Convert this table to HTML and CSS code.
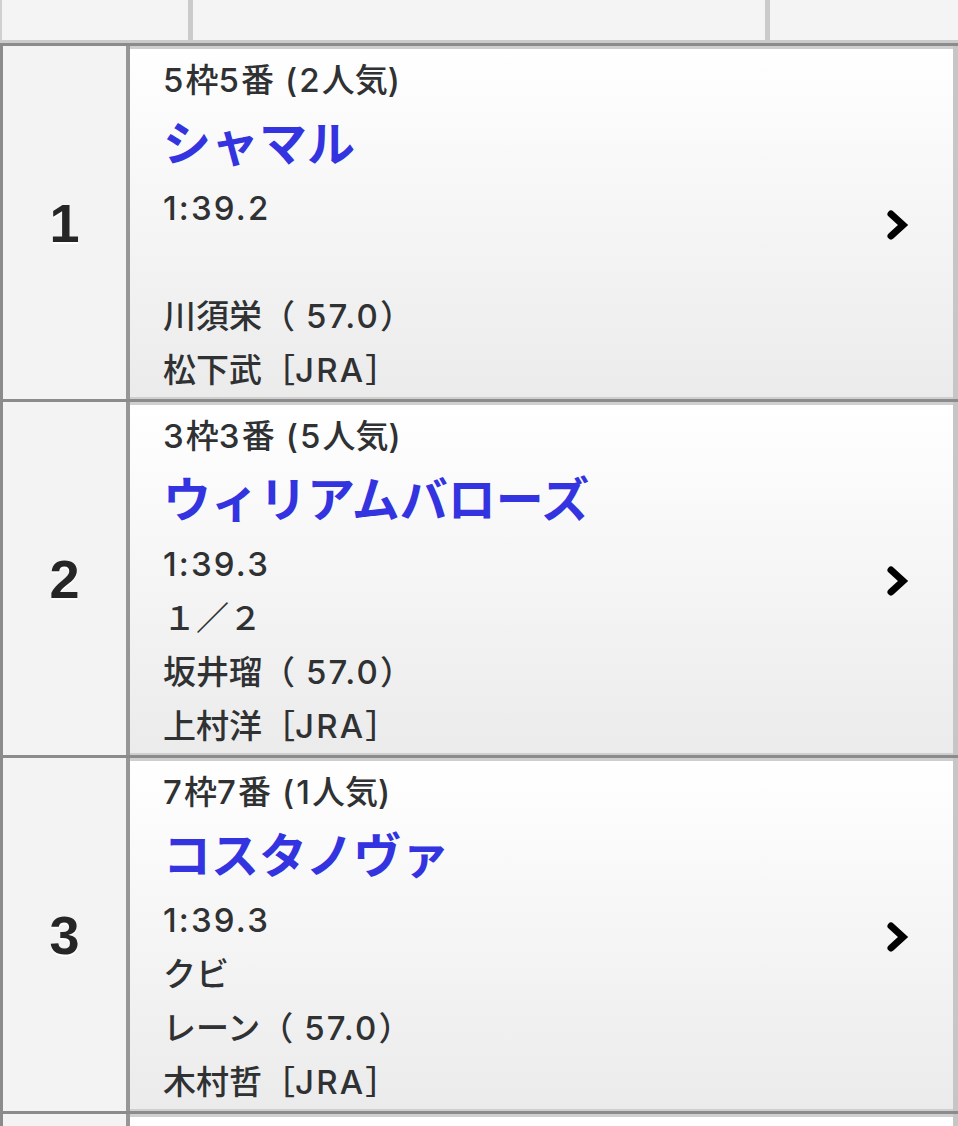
FILE: index.html
```html
<!DOCTYPE html>
<html lang="ja">
<head>
<meta charset="utf-8">
<link rel="stylesheet" href="styles.css">
</head>
<body>
<div class="table">
  <div class="toprow">
    <div class="tc tc1"></div>
    <div class="tc tc2"></div>
    <div class="tc tc3"></div>
  </div>

  <div class="row">
    <div class="rank">1</div>
    <div class="cell">
      <div class="info">
        <div class="line head"><span class="en">5</span>枠<span class="en">5</span>番<span class="en"> (2</span>人気<span class="en">)</span></div>
        <div class="line name">シャマル</div>
        <div class="line"><span class="en">1:39.2</span></div>
        <div class="line"></div>
        <div class="line">川須栄（<span class="en"> 57.0</span>）</div>
        <div class="line">松下武［<span class="en">JRA</span>］</div>
      </div>
      <svg class="chev" viewBox="0 0 24 32" width="24" height="32"><polyline points="5,5 17,16 5,27" fill="none" stroke="#000" stroke-width="7" stroke-linecap="round" stroke-linejoin="miter"/></svg>
    </div>
  </div>

  <div class="row">
    <div class="rank">2</div>
    <div class="cell">
      <div class="info">
        <div class="line head"><span class="en">3</span>枠<span class="en">3</span>番<span class="en"> (5</span>人気<span class="en">)</span></div>
        <div class="line name">ウィリアムバローズ</div>
        <div class="line"><span class="en">1:39.3</span></div>
        <div class="line">１／２</div>
        <div class="line">坂井瑠（<span class="en"> 57.0</span>）</div>
        <div class="line">上村洋［<span class="en">JRA</span>］</div>
      </div>
      <svg class="chev" viewBox="0 0 24 32" width="24" height="32"><polyline points="5,5 17,16 5,27" fill="none" stroke="#000" stroke-width="7" stroke-linecap="round" stroke-linejoin="miter"/></svg>
    </div>
  </div>

  <div class="row">
    <div class="rank">3</div>
    <div class="cell">
      <div class="info">
        <div class="line head"><span class="en">7</span>枠<span class="en">7</span>番<span class="en"> (1</span>人気<span class="en">)</span></div>
        <div class="line name">コスタノヴァ</div>
        <div class="line"><span class="en">1:39.3</span></div>
        <div class="line">クビ</div>
        <div class="line">レーン（<span class="en"> 57.0</span>）</div>
        <div class="line">木村哲［<span class="en">JRA</span>］</div>
      </div>
      <svg class="chev" viewBox="0 0 24 32" width="24" height="32"><polyline points="5,5 17,16 5,27" fill="none" stroke="#000" stroke-width="7" stroke-linecap="round" stroke-linejoin="miter"/></svg>
    </div>
  </div>

  <div class="row">
    <div class="rank"></div>
    <div class="cell"></div>
  </div>
</div>
</body>
</html>
```

FILE: styles.css
```css
html, body {
  margin: 0;
  padding: 0;
  background: #ffffff;
}
body {
  width: 958px;
  height: 1126px;
  overflow: hidden;
  font-family: Inter, "Noto Sans CJK JP", sans-serif;
  color: #2f3133;
}
.table {
  display: flex;
  flex-direction: column;
}
.toprow {
  display: flex;
  height: 40px;
  border-bottom: 3px solid #cbcbcb;
  background: #f4f4f4;
}
.tc1 {
  width: 193px;
  box-sizing: border-box;
  border-left: 2px solid #d0d0d0;
  border-right: 5px solid #cacaca;
}
.tc2 {
  width: 572px;
  border-right: 5px solid #cacaca;
}
.tc3 {
  flex: 1;
}
.row {
  display: flex;
  border-top: 3px solid #8b8b8b;
}
.rank {
  width: 123px;
  border-left: 3px solid #8b8b8b;
  border-right: 4px solid #969696;
  background: #f3f3f3;
  display: flex;
  align-items: center;
  justify-content: center;
  font-family: "Liberation Sans", Arial, sans-serif;
  font-weight: 700;
  font-size: 54px;
  color: #262626;
  text-shadow: 0 2px 1px #ffffff;
}
.cell {
  flex: 1;
  display: flex;
  align-items: center;
  background: linear-gradient(#ffffff, #ebebeb);
  box-shadow: inset 0 3px 0 #cfcfcf, inset 0 -2px 0 #cfcfcf;
  border-right: 5px solid #c6c6c6;
  padding: 7px 0 2px 33px;
  min-height: 344px;
}
.info {
  flex: 1;
}
.line {
  height: 54px;
  line-height: 54px;
  font-size: 33px;
  font-weight: 500;
  white-space: nowrap;
}
.en {
  letter-spacing: 0.065em;
}
.line.name {
  height: 74px;
  line-height: 74px;
  font-size: 48px;
  font-weight: 700;
  color: #3333e0;
}
.chev {
  flex: none;
  margin-right: 43px;
}
```
